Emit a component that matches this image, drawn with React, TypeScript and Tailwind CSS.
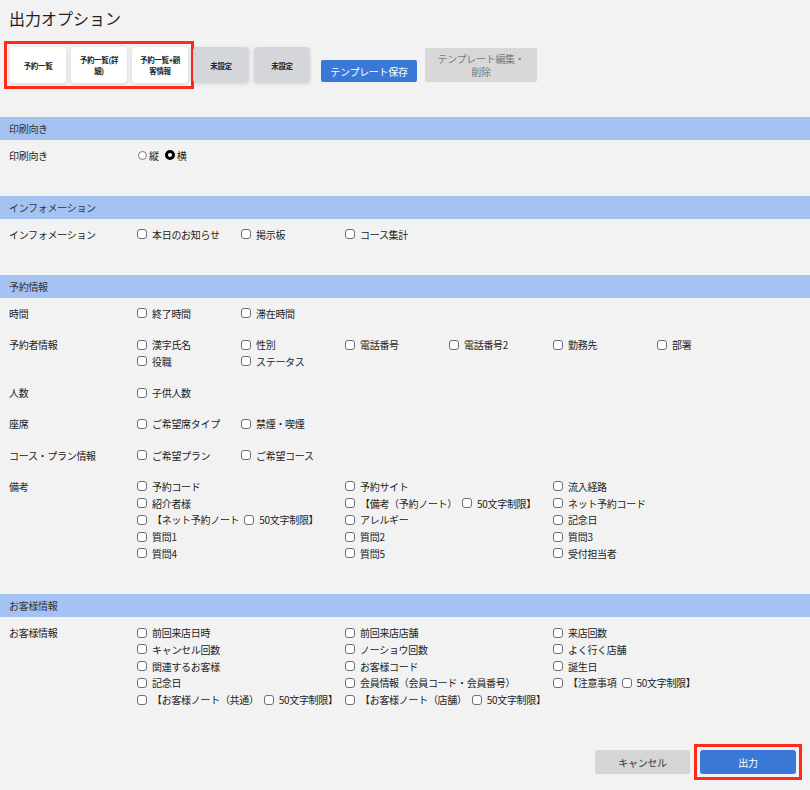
import React from 'react';

type Item = string | [string, string];

type Row = {
  label: string;
  cols?: 6 | 3;
  items?: Item[];
  radio?: boolean;
};

type Section = { title: string; rows: Row[] };

const sections: Section[] = [
  {
    title: '印刷向き',
    rows: [{ label: '印刷向き', radio: true }],
  },
  {
    title: 'インフォメーション',
    rows: [{ label: 'インフォメーション', items: ['本日のお知らせ', '掲示板', 'コース集計'] }],
  },
  {
    title: '予約情報',
    rows: [
      { label: '時間', items: ['終了時間', '滞在時間'] },
      {
        label: '予約者情報',
        items: ['漢字氏名', '性別', '電話番号', '電話番号2', '勤務先', '部署', '役職', 'ステータス'],
      },
      { label: '人数', items: ['子供人数'] },
      { label: '座席', items: ['ご希望席タイプ', '禁煙・喫煙'] },
      { label: 'コース・プラン情報', items: ['ご希望プラン', 'ご希望コース'] },
      {
        label: '備考',
        cols: 3,
        items: [
          '予約コード', '予約サイト', '流入経路',
          '紹介者様', ['【備考（予約ノート）', '50文字制限】'], 'ネット予約コード',
          ['【ネット予約ノート', '50文字制限】'], 'アレルギー', '記念日',
          '質問1', '質問2', '質問3',
          '質問4', '質問5', '受付担当者',
        ],
      },
    ],
  },
  {
    title: 'お客様情報',
    rows: [
      {
        label: 'お客様情報',
        cols: 3,
        items: [
          '前回来店日時', '前回来店店舗', '来店回数',
          'キャンセル回数', 'ノーショウ回数', 'よく行く店舗',
          '関連するお客様', 'お客様コード', '誕生日',
          '記念日', '会員情報（会員コード・会員番号）', ['【注意事項', '50文字制限】'],
          ['【お客様ノート（共通）', '50文字制限】'], ['【お客様ノート（店舗）', '50文字制限】'],
        ],
      },
    ],
  },
];

const templates = [
  { label: '予約一覧', active: true },
  { label: '予約一覧(詳細)', active: true },
  { label: '予約一覧+顧客情報', active: true },
  { label: '未設定', active: false },
  { label: '未設定', active: false },
];

const Box = () => (
  <span className="w-[10px] h-[10px] shrink-0 rounded-[3px] border border-[#6b6e7a] bg-white" />
);

const Check = ({ text }: { text: string }) => (
  <span className="flex items-center gap-[5px] whitespace-nowrap">
    <Box />
    <span>{text}</span>
  </span>
);

const Option = ({ item }: { item: Item }) =>
  typeof item === 'string' ? (
    <Check text={item} />
  ) : (
    <span className="flex items-center gap-[5px]">
      <Check text={item[0]} />
      <Check text={item[1]} />
    </span>
  );

const TemplateButton = ({ label, active }: { label: string; active: boolean }) => (
  <button
    className={`w-[56px] h-[36px] rounded-[4px] px-[6px] text-[7.5px] font-bold leading-[11px] text-[#222] shadow-[0_1px_4px_rgba(0,0,0,0.12)] ${
      active ? 'bg-white' : 'bg-[#d4d6dc]'
    }`}
  >
    {label}
  </button>
);

const OptionRow = ({ row }: { row: Row }) => (
  <div className="flex">
    <div className="w-[128px] shrink-0 h-[16.75px] flex items-center">{row.label}</div>
    {row.radio ? (
      <div className="flex items-center h-[16.75px]">
        <span className="w-[9px] h-[9px] rounded-full border border-[#777] bg-white ml-[1px]" />
        <span className="ml-[2px]">縦</span>
        <span className="w-[10px] h-[10px] rounded-full border-[3px] border-black bg-white ml-[6px]" />
        <span className="ml-[2px]">横</span>
      </div>
    ) : (
      <div
        className={`grid auto-rows-[16.75px] items-center ${
          row.cols === 3 ? 'grid-cols-[repeat(3,208px)]' : 'grid-cols-[repeat(6,104px)]'
        }`}
      >
        {row.items?.map((item, i) => <Option key={i} item={item} />)}
      </div>
    )}
  </div>
);

export default function App() {
  return (
    <div
      className="w-[810px] h-[790px] bg-[#f2f2f2] text-[10px] tracking-[-0.3px] text-[#222] overflow-hidden"
      style={{ fontFamily: '"Noto Sans CJK JP", "Noto Sans", sans-serif' }}
    >
      <h1 className="pt-[8px] pl-[9px] text-[16px] leading-[20px] font-normal tracking-normal">出力オプション</h1>

      <div className="flex items-end pl-[10px] mt-[19px]">
        <div className="flex gap-[5px] outline-[3px] outline-solid outline-[#ff2a1a] outline-offset-[3px]">
          {templates.slice(0, 3).map((t, i) => (
            <TemplateButton key={i} {...t} />
          ))}
        </div>
        <div className="flex gap-[5px] ml-[5px]">
          {templates.slice(3).map((t, i) => (
            <TemplateButton key={i} {...t} />
          ))}
        </div>
        <button className="ml-[11px] w-[96px] h-[22px] rounded-[2px] bg-[#3a78d8] text-white text-[10px] mb-[1px]">
          テンプレート保存
        </button>
        <button className="ml-[8px] w-[112px] h-[34px] rounded-[2px] bg-[#d8d8d8] text-[#7a7a7a] text-[10px] leading-[13px] px-[10px] mb-[1px]">
          テンプレート編集・削除
        </button>
      </div>

      <div className="mt-[34px]">
        {sections.map((s) => (
          <section key={s.title}>
            <div className="h-[23px] bg-[#a4c2f2] flex items-center pl-[9px] text-[#333]">{s.title}</div>
            <div className="px-[9px] pt-[7px] pb-[32.3px] flex flex-col gap-[14.5px]">
              {s.rows.map((r) => (
                <OptionRow key={r.label} row={r} />
              ))}
            </div>
          </section>
        ))}
      </div>

      <div className="flex justify-end items-center gap-[10px] pr-[14px] mt-[10px]">
        <button className="w-[95px] h-[24px] rounded-[2px] bg-[#d5d5d5] text-[#333] text-[10px]">キャンセル</button>
        <div className="outline-[3px] outline-solid outline-[#ff2a1a] outline-offset-[3px]">
          <button className="block w-[96px] h-[24px] rounded-[3px] bg-[#3a78d8] text-white text-[10px]">出力</button>
        </div>
      </div>
    </div>
  );
}
